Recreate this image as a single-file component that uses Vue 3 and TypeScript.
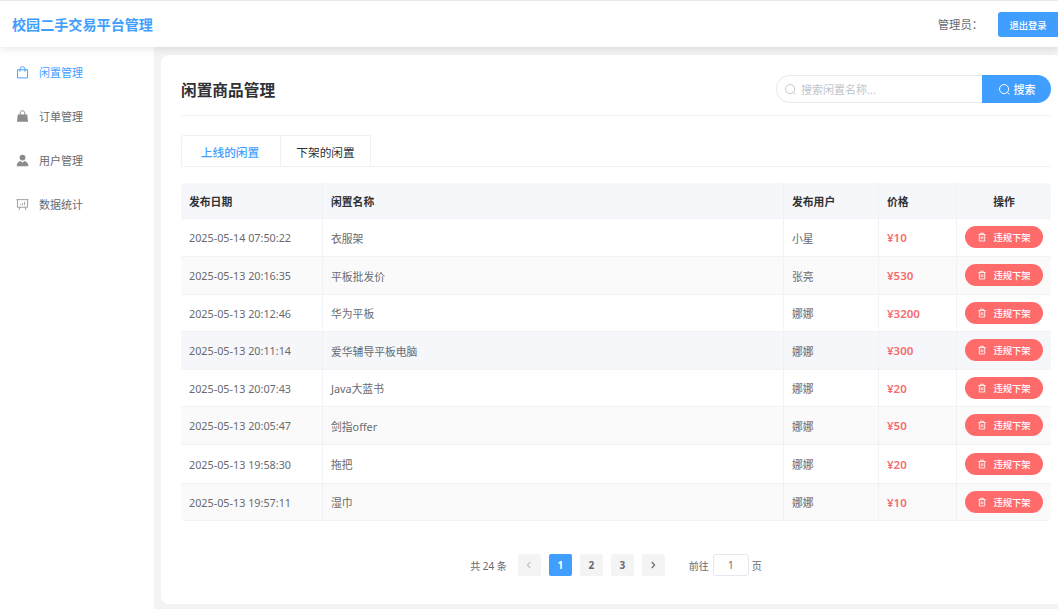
<template>
  <div class="layout">
    <header class="topbar">
      <h1 class="brand">校园二手交易平台管理</h1>
      <div class="user-area">
        <span class="admin">管理员：</span>
        <button class="logout" type="button">退出登录</button>
      </div>
    </header>
    <div class="body">
      <aside class="sidebar">
        <a v-for="item in menu" :key="item.label" class="menu-item" :class="{ active: item.active }">
          <svg class="menu-icon" viewBox="0 0 16 16" v-html="item.icon"></svg>
          <span>{{ item.label }}</span>
        </a>
      </aside>
      <main class="main">
        <section class="card">
          <div class="card-head">
            <h2>闲置商品管理</h2>
            <div class="search">
              <div class="search-input">
                <svg class="search-icon" viewBox="0 0 16 16"><circle cx="7.5" cy="7.5" r="5.6" /><path d="M11.6 11.6l2.4 2.4" /></svg>
                <span>搜索闲置名称...</span>
              </div>
              <button class="search-btn" type="button">
                <svg class="search-icon" viewBox="0 0 16 16"><circle cx="7.5" cy="7.5" r="5.6" /><path d="M11.6 11.6l2.4 2.4" /></svg>
                搜索
              </button>
            </div>
          </div>
          <div class="tabs">
            <div class="tab on">上线的闲置</div>
            <div class="tab">下架的闲置</div>
          </div>
          <div class="table">
            <div class="row head">
              <div class="cell">发布日期</div>
              <div class="cell">闲置名称</div>
              <div class="cell">发布用户</div>
              <div class="cell">价格</div>
              <div class="cell center">操作</div>
            </div>
            <div
              v-for="(row, i) in rows"
              :key="row.date"
              class="row"
              :class="{ striped: i % 2 === 1, hovered: i === 3 }"
              :style="{ height: row.h + 'px' }"
            >
              <div class="cell">{{ row.date }}</div>
              <div class="cell">{{ row.name }}</div>
              <div class="cell">{{ row.user }}</div>
              <div class="cell price">¥{{ row.price }}</div>
              <div class="cell center">
                <button class="off-btn" type="button">
                  <svg viewBox="0 0 12 12"><path d="M1.6 3h8.8M4.4 3V1.4h3.2V3M2.8 3v7.8h6.4V3M5 5.2v3.4M7 5.2v3.4" /></svg>
                  违规下架
                </button>
              </div>
            </div>
          </div>
          <div class="pager">
            <span class="total">共 24 条</span>
            <span class="page disabled"><svg viewBox="0 0 10 10"><path d="M6.2 2L3.4 5l2.8 3" /></svg></span>
            <span class="page current">1</span>
            <span class="page">2</span>
            <span class="page">3</span>
            <span class="page"><svg viewBox="0 0 10 10"><path d="M3.8 2l2.8 3-2.8 3" /></svg></span>
            <span class="jump">前往</span>
            <span class="jump-box">1</span>
            <span class="jump-end">页</span>
          </div>
        </section>
      </main>
    </div>
  </div>
</template>

<script setup lang="ts">
interface MenuItem {
  label: string;
  icon: string;
  active?: boolean;
}

interface GoodsRow {
  date: string;
  name: string;
  user: string;
  price: number;
  h: number;
}

const menu: MenuItem[] = [
  {
    label: '闲置管理',
    active: true,
    icon: '<path fill="none" stroke="currentColor" stroke-width="1.2" d="M1.8 4.6h12.4v10H1.8zM5 7V3.4C5 1.9 6.2 1 8 1s3 .9 3 2.4V7"/>'
  },
  {
    label: '订单管理',
    icon: '<path fill="currentColor" d="M2.2 5.6h11.6l1 9H1.2z"/><path fill="none" stroke="currentColor" stroke-width="1.2" d="M5.2 6V3.6C5.2 2 6.3 1 8 1s2.8 1 2.8 2.6V6"/>'
  },
  {
    label: '用户管理',
    icon: '<circle fill="currentColor" cx="8" cy="4.4" r="3.6"/><path fill="currentColor" d="M.8 15c0-3.9 2.6-6.1 5-6.3L8 10.8l2.2-2.1c2.4.2 5 2.4 5 6.3z"/>'
  },
  {
    label: '数据统计',
    icon: '<path fill="none" stroke="currentColor" stroke-width="1" d="M.6 2h14.8M1.8 2v9.4h12.4V2M5 11.4l-1.4 3.8M11 11.4l1.4 3.8M5.4 9V7.8M8 9V6.2M10.6 9V4.6"/>'
  }
];

const rows: GoodsRow[] = [
  { date: '2025-05-14 07:50:22', name: '衣服架', user: '小星', price: 10, h: 38 },
  { date: '2025-05-13 20:16:35', name: '平板批发价', user: '张亮', price: 530, h: 38 },
  { date: '2025-05-13 20:12:46', name: '华为平板', user: '娜娜', price: 3200, h: 37 },
  { date: '2025-05-13 20:11:14', name: '爱华辅导平板电脑', user: '娜娜', price: 300, h: 38 },
  { date: '2025-05-13 20:07:43', name: 'Java大蓝书', user: '娜娜', price: 20, h: 37 },
  { date: '2025-05-13 20:05:47', name: '剑指offer', user: '娜娜', price: 50, h: 38 },
  { date: '2025-05-13 19:58:30', name: '拖把', user: '娜娜', price: 20, h: 39 },
  { date: '2025-05-13 19:57:11', name: '湿巾', user: '娜娜', price: 10, h: 37 }
];
</script>

<style>
html,
body {
  margin: 0;
  background: #f0f2f5;
}
</style>

<style scoped>
.layout {
  width: 1058px;
  height: 609px;
  overflow: hidden;
  display: flex;
  flex-direction: column;
  font-family: "Noto Sans", "Noto Sans CJK SC", sans-serif;
  color: #686a70;
  background: #f3f3f3;
}

.topbar {
  height: 46px;
  flex: none;
  border-top: 1px solid #e9e9e9;
  background: #fff;
  display: flex;
  align-items: center;
  justify-content: space-between;
  padding-left: 12px;
  box-shadow: 0 2px 8px rgba(0, 0, 0, 0.1);
  position: relative;
  z-index: 2;
}

.brand {
  margin: 0;
  font-size: 14.1px;
  font-weight: 700;
  color: #409eff;
}

.user-area {
  display: flex;
  align-items: center;
  gap: 15px;
}

.admin {
  font-size: 11.3px;
}

.logout {
  width: 60px;
  height: 25px;
  margin-top: 1px;
  padding: 0;
  border: 0;
  border-radius: 3px 0 0 3px;
  background: #409eff;
  color: #fff;
  font: 500 9.3px "Noto Sans", "Noto Sans CJK SC", sans-serif;
}

.body {
  flex: 1;
  display: flex;
  min-height: 0;
}

.sidebar {
  width: 154px;
  flex: none;
  background: #fff;
  padding-top: 3px;
  box-sizing: border-box;
}

.menu-item {
  height: 44px;
  display: flex;
  align-items: center;
  gap: 10px;
  padding-left: 16px;
  font-size: 11px;
}

.menu-item.active {
  color: #409eff;
}

.menu-icon {
  width: 13px;
  height: 13px;
  color: #8c8c8c;
  flex: none;
}

.menu-item.active .menu-icon {
  color: #409eff;
}

.main {
  flex: 1;
  min-width: 0;
  padding: 8px 0 5px 7px;
}

.card {
  height: 100%;
  box-sizing: border-box;
  background: #fff;
  border-radius: 8px 0 0 8px;
  padding: 20px 7px 0 20px;
}

.card-head {
  height: 41px;
  box-sizing: border-box;
  display: flex;
  align-items: flex-start;
  justify-content: space-between;
  border-bottom: 1px solid #f0f2f5;
}

.card-head h2 {
  margin: 3px 0 0;
  font-size: 15.7px;
  line-height: 24px;
  font-weight: 600;
  color: #303133;
}

.search {
  display: flex;
  height: 28px;
}

.search-input {
  width: 206px;
  box-sizing: border-box;
  border: 1px solid #e8ebf0;
  border-right: 0;
  border-radius: 14px 0 0 14px;
  display: flex;
  align-items: center;
  gap: 4px;
  padding-left: 7px;
  font-size: 11px;
  color: #c0c4cc;
}

.search-icon {
  width: 13px;
  height: 13px;
  fill: none;
  stroke: currentColor;
  stroke-width: 1.2;
  flex: none;
}

.search-btn {
  width: 69px;
  padding: 0;
  border: 0;
  border-radius: 0 14px 14px 0;
  background: #409eff;
  color: #fff;
  font: 500 11px "Noto Sans", "Noto Sans CJK SC", sans-serif;
  display: flex;
  align-items: center;
  justify-content: center;
  gap: 3px;
}

.tabs {
  margin-top: 19px;
  height: 32px;
  box-sizing: border-box;
  display: flex;
  border-bottom: 1px solid #eef0f4;
}

.tab {
  box-sizing: border-box;
  width: 90px;
  height: 32px;
  display: flex;
  align-items: center;
  justify-content: center;
  font-size: 11.7px;
  color: #303133;
  border: 1px solid #eef0f4;
  border-left: 0;
  border-bottom: 0;
}

.tab.on {
  width: 100px;
  padding-right: 2px;
  border-left: 1px solid #eef0f4;
  border-radius: 3px 0 0 0;
  color: #409eff;
  font-weight: 500;
}

.table {
  margin-top: 16px;
  width: 870px;
  border-radius: 4px;
  overflow: hidden;
}

.row {
  display: grid;
  grid-template-columns: 142px 461px 95px 78px 1fr;
  height: 38px;
  background: #fff;
  border-bottom: 1px solid #f0f2f5;
  box-sizing: border-box;
  font-size: 10.8px;
}

.row.head {
  height: 36px;
  background: #f5f7fa;
  color: #303133;
  font-weight: 600;
}

.row.striped {
  background: #fafafa;
}

.row.hovered {
  background: #f5f7fa;
}

.cell {
  display: flex;
  align-items: center;
  padding-left: 8px;
  border-right: 1px solid #f0f2f5;
  white-space: nowrap;
}

.cell:last-child {
  border-right: 0;
}

.cell.center {
  justify-content: center;
  padding-left: 0;
}

.price {
  color: #f56c6c;
  font-size: 11.5px;
  font-weight: 600;
}

.off-btn {
  width: 78px;
  height: 22px;
  margin-bottom: 1px;
  padding: 0;
  border: 0;
  border-radius: 11px;
  background: #ff6b6b;
  color: #fff;
  font: 500 9.3px "Noto Sans", "Noto Sans CJK SC", sans-serif;
  display: flex;
  align-items: center;
  justify-content: center;
  gap: 6px;
}

.off-btn svg {
  width: 10px;
  height: 10px;
  fill: none;
  stroke: currentColor;
  stroke-width: 1;
}

.pager {
  margin-top: 33px;
  height: 22px;
  display: flex;
  align-items: center;
  justify-content: center;
  font-size: 10px;
}

.total {
  margin-right: 11px;
}

.page {
  width: 23px;
  height: 22px;
  margin-right: 8px;
  border-radius: 2px;
  background: #f4f4f5;
  display: flex;
  align-items: center;
  justify-content: center;
  font-weight: 700;
}

.page svg {
  width: 10px;
  height: 10px;
  fill: none;
  stroke: currentColor;
  stroke-width: 1.2;
}

.page.disabled {
  color: #c0c4cc;
}

.page.current {
  background: #409eff;
  color: #fff;
}

.jump {
  margin-left: 16px;
  margin-right: 4px;
}

.jump-box {
  box-sizing: border-box;
  width: 36px;
  height: 22px;
  border: 1px solid #e4e7ed;
  border-radius: 3px;
  display: flex;
  align-items: center;
  justify-content: center;
}

.jump-end {
  margin-left: 3px;
}
</style>
